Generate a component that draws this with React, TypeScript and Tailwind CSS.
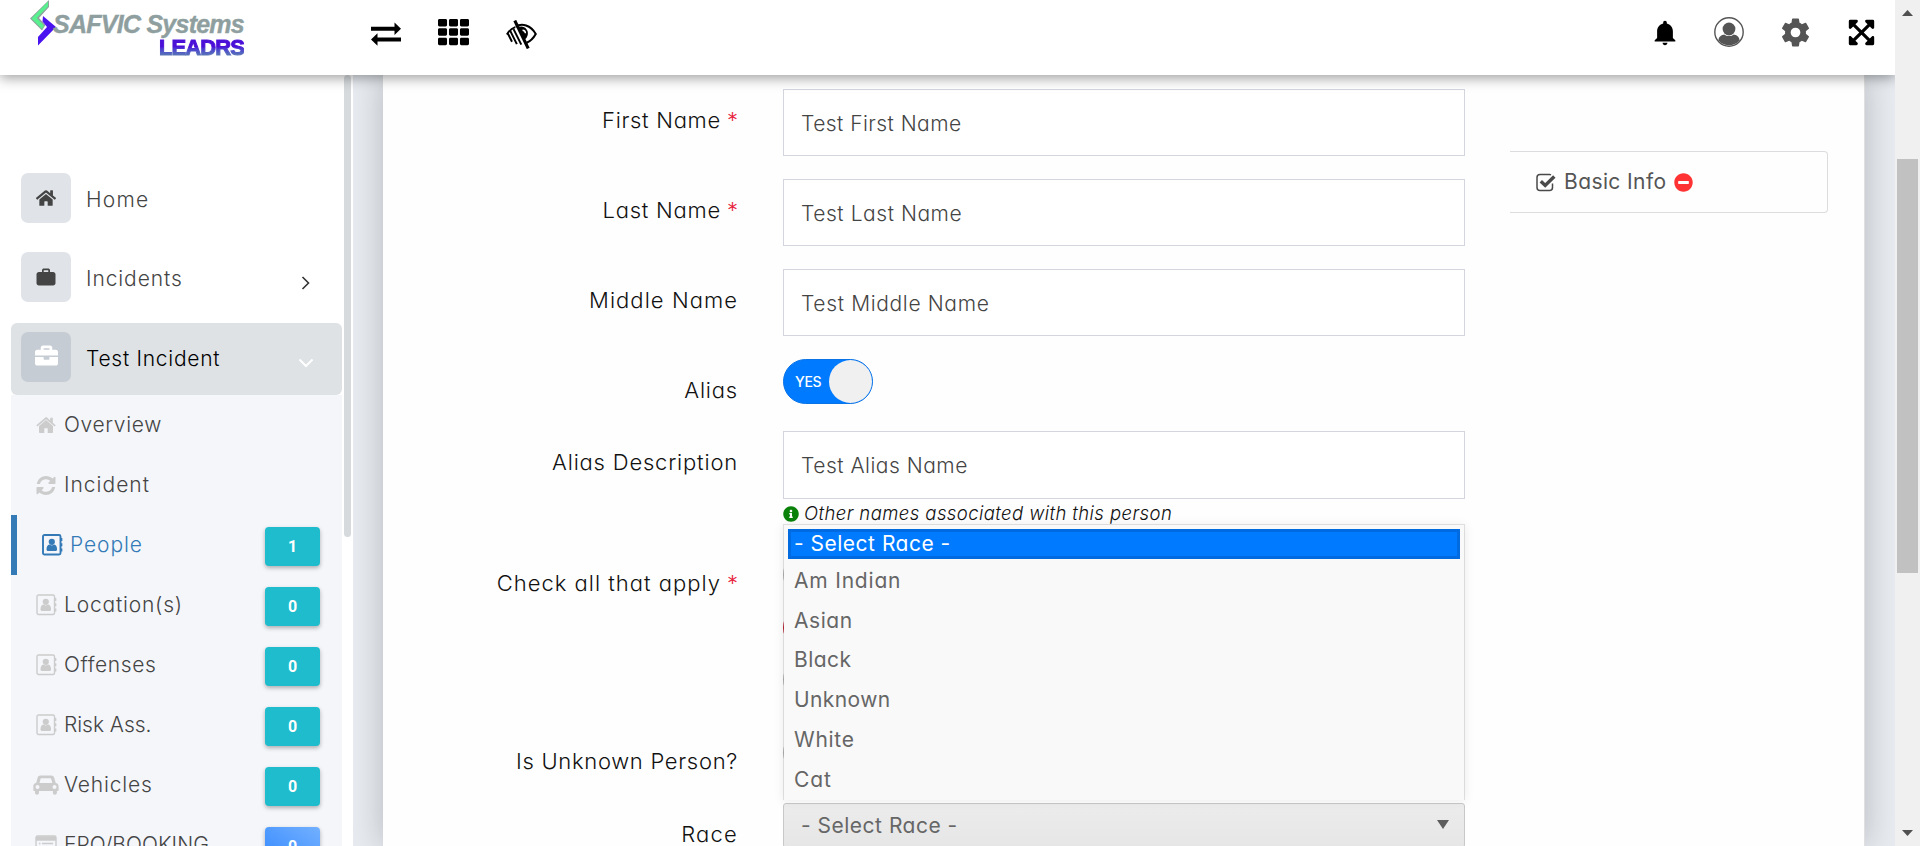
import React from "react";
import {
  FaHome,
  FaBriefcase,
  FaTh,
  FaExpandArrowsAlt,
  FaMinusCircle,
  FaInfoCircle,
} from "react-icons/fa";
import { IoSettingsSharp } from "react-icons/io5";
import { IoMdNotifications } from "react-icons/io";

function SwapIcon() {
  return (
    <svg className="h-[24px] w-[30px]" viewBox="0 0 30 24" fill="currentColor">
      <path d="M0 4.800h23.500V.500L30 6.800 23.500 13V8.800H0z" />
      <path d="M30 15.500H6.500v-4.300L0 17.500l6.500 6.200v-4.200H30z" />
    </svg>
  );
}

function LowVisionIcon() {
  return (
    <svg className="h-[29px] w-[31px]" viewBox="0 0 30 28" fill="none" stroke="currentColor">
      <path d="M9.500 6.500C15 2.500 24 5 28.800 13.500C26 18.500 23.500 20.500 20 22" strokeWidth="2" />
      <path d="M9 6.800C5.500 8 2.500 11 .800 14" strokeWidth="1.800" />
      <path d="M12 7C17 4.500 22.500 9.500 21 14.500C20 18 18.500 19 17.500 18.500Z" fill="currentColor" stroke="none" />
      <path d="M16 9.800a3 3 0 0 1 2.800 3" stroke="#fff" strokeWidth="1.400" />
      <path d="M8.500 .500L21.500 27.500" strokeWidth="3" />
      <path d="M1.800 13l4 8M4 10.300l6.500 13M7.300 8.800l7.500 15" strokeWidth="1.900" />
    </svg>
  );
}

function UserIcon() {
  return (
    <svg className="h-[30px] w-[30px]" viewBox="0 0 30 30">
      <circle cx="15" cy="15" r="14.200" fill="none" stroke="#555" strokeWidth="1.400" />
      <path d="M4.500 23.500C4.500 19.500 7.500 18 10.500 17.500C13 19.500 17 19.500 19.500 17.500C22.500 18 25.500 19.500 25.500 23.500A14 14 0 0 1 4.500 23.500Z" fill="#555" />
      <circle cx="15" cy="12" r="7" fill="#fff" />
      <circle cx="15" cy="12" r="6.400" fill="#555" />
    </svg>
  );
}

function SuitcaseIcon() {
  return (
    <svg className="h-[18px] w-[20px]" viewBox="0 0 20 18" fill="currentColor">
      <path d="M3 4h3V2.300C6 1 7 .500 8 .500h4c1 0 2 .500 2 1.800V4h3c1.500 0 2.500 1 2.500 2.300v9c0 1.200-1 2.200-2.500 2.200H3C1.500 17.500.500 16.500.500 15.300v-9C.500 5 1.500 4 3 4zm4.700 0h4.600V2.300H7.700z" />
    </svg>
  );
}

function SolidHouseIcon() {
  return (
    <svg className="h-[17px] w-[20px]" viewBox="0 0 20 17" fill="currentColor">
      <path d="M10 3L3 9v6.200c0 .500.300.800.800.800H8.300v-4.800h3.400V16h4.500c.500 0 .800-.300.800-.800V9z" />
      <path d="M10 0L.300 8.200l1 1.200L10 2.200l8.700 7.200 1-1.200L16.800 5.700V.800h-2.600v2.700L11 .500C10.500.100 9.500.100 10 0z" />
    </svg>
  );
}

function RefreshIcon() {
  return (
    <svg className="h-[19px] w-[20px]" viewBox="0 0 1536 1536" fill="currentColor">
      <path d="M1511 928q0 5-1 7-64 268-268 434.500T764 1536q-146 0-282.500-55T238 1324l-129 129q-19 19-45 19t-45-19-19-45V960q0-26 19-45t45-19h448q26 0 45 19t19 45-19 45l-137 137q71 66 161 102t187 36q134 0 250-65t186-179q11-17 53-117 8-23 30-23h192q13 0 22.500 9.500t9.500 22.500zm25-800v448q0 26-19 45t-45 19h-448q-26 0-45-19t-19-45 19-45l138-138Q969 256 768 256q-134 0-250 65T332 500q-11 17-53 117-8 23-30 23H50q-13 0-22.500-9.500T18 608v-7q65-268 270-434.500T768 0q146 0 284 55.500T1297 212l130-129q19-19 45-19t45 19 19 45z" />
    </svg>
  );
}

function AddressBookIcon({ bold }: { bold?: boolean }) {
  return (
    <svg className="h-[22px] w-[21px]" viewBox="0 0 21 22" fill="none" stroke="currentColor">
      <rect x="1" y="1" width="17.500" height="19.500" rx="1.500" strokeWidth={bold ? 1.900 : 1.400} />
      <path d="M19.500 4v3M19.500 9.300v3M19.500 14.600v3" strokeWidth="1.700" />
      <circle cx="9.800" cy="7.800" r="3.100" fill="currentColor" stroke="none" />
      <path d="M4.500 15.500c0-3 1.200-4.500 2.800-4.900 1.500 1.100 3.500 1.100 5 0 1.600.400 2.800 1.900 2.800 4.900 0 .900-.700 1.500-1.500 1.500H6c-.800 0-1.500-.600-1.500-1.500z" fill="currentColor" stroke="none" />
    </svg>
  );
}

function CarIcon() {
  return (
    <svg className="h-[20px] w-[26px]" viewBox="0 0 26 20" fill="currentColor" fillRule="evenodd">
      <path d="M7.500.500h10.700c1.500 0 2.600.900 3 2.300l1.500 5.300c1.800.200 2.900 1.400 2.900 3.200v4c0 .400-.300.700-.700.700h-1v1.700c0 1.200-.900 2-2 2s-2-.800-2-2V16H6v1.700c0 1.200-.900 2-2 2s-2-.800-2-2V16H1c-.400 0-.700-.300-.700-.700v-4c0-1.800 1.100-3 2.900-3.200l1.400-5.300C5 1.400 6 .500 7.500.500zm-1 7.500h12.800l-1.200-4.300c-.100-.300-.300-.400-.600-.400H8.200c-.300 0-.500.100-.600.400zM4.500 10a2 2 0 1 0 0 4 2 2 0 0 0 0-4zm17 0a2 2 0 1 0 0 4 2 2 0 0 0 0-4z" />
    </svg>
  );
}

function ListIcon() {
  return (
    <svg className="h-[20px] w-[22px]" viewBox="0 0 22 20" fill="none" stroke="currentColor">
      <rect x="1" y="1" width="20" height="18" rx="1.500" strokeWidth="1.400" />
      <path d="M1 3.500h20" strokeWidth="4.500" />
      <path d="M4 8.500h1.500M7 8.500h11M4 12h1.500M7 12h11M4 15.500h1.500M7 15.500h11" strokeWidth="1.400" />
    </svg>
  );
}

function CheckSquareIcon() {
  return (
    <svg className="h-[19px] w-[20px]" viewBox="0 0 20 19" fill="none" stroke="#4a4a4a">
      <path d="M16.500 10.500v4c0 1.700-1.300 3-3 3H4c-1.700 0-3-1.300-3-3V4.500c0-1.700 1.300-3 3-3h9.500c.600 0 1 .100 1.500.400" strokeWidth="1.500" />
      <path d="M4.800 8.300l4.400 4.200L18.300 3.500" strokeWidth="3.400" />
    </svg>
  );
}

function LogoMark() {
  return (
    <svg className="h-[46px] w-[26px]" viewBox="0 0 26 46">
      <path d="M19 0V7L9 18L15.500 25L12 30.500L0 18.500Z" fill="#8fa39c" />
      <path d="M18 1.500V6.500L6.800 18L14 25.500L12 29L1.500 18.500Z" fill="#58f08f" />
      <path d="M13 16L26 27L8 45.500V37L17 27L12.500 21.500Z" fill="#4a12ee" />
    </svg>
  );
}

function Header() {
  return (
    <header className="relative z-20 flex h-[75px] shrink-0 items-start bg-white shadow-[0_3px_12px_rgba(0,0,0,0.38)]">
      <div className="flex w-[371px] pl-[30px]">
        <LogoMark />
        <div className="flex w-[188px] flex-col items-end font-['Liberation_Sans',sans-serif] font-bold whitespace-nowrap">
          <span className="mt-[11px] text-[25px] leading-[26px] tracking-[-0.750px] text-[#8f9f9f] italic [-webkit-text-stroke:0.400px_#8f9f9f]">
            SAFVIC Systems
          </span>
          <span className="bg-linear-to-b from-[#4b10d8] from-45% to-[#5f7fae] to-90% bg-clip-text text-[22px] leading-[22px] tracking-[-0.900px] text-transparent [-webkit-text-stroke:1px_transparent]">
            LEADRS
          </span>
        </div>
      </div>
      <div className="flex items-start pt-[19px] text-black">
        <div className="pt-[3px]">
          <SwapIcon />
        </div>
        <FaTh className="-mt-[2px] ml-[37px] h-[30px] w-[31px]" preserveAspectRatio="none" />
        <div className="mt-[1px] ml-[37px]">
          <LowVisionIcon />
        </div>
      </div>
      <div className="ml-auto flex items-start gap-[36px] pt-[17px] pr-[19px]">
        <IoMdNotifications className="mt-[1px] mr-[-2px] size-[30px] text-black" />
        <UserIcon />
        <IoSettingsSharp className="size-[31px] text-[#555]" />
        <FaExpandArrowsAlt className="mt-[1px] size-[29px] text-black" />
      </div>
    </header>
  );
}

interface NavItemProps {
  icon: React.ReactNode;
  label: string;
  tracking: string;
  chevron?: "right" | "down";
  active?: boolean;
}

function NavItem({ icon, label, tracking, chevron, active }: NavItemProps) {
  return (
    <div
      className={`flex h-[72px] shrink-0 items-start rounded-[6px] pt-[9px] pl-[10px] ${
        active ? "bg-[#dee2e5] text-black" : "text-[#444]"
      }`}
    >
      <span
        className={`flex size-[50px] items-center justify-center rounded-[7px] ${
          active ? "bg-[#c5ccd3] pb-[4px] text-white" : "bg-[#e0e4e8]"
        }`}
      >
        {icon}
      </span>
      <span className={`ml-[15px] pt-[11px] text-[21px] leading-[32px] font-light ${tracking}`}>{label}</span>
      {chevron && (
        <svg
          className={`mt-[23px] mr-[28px] ml-auto h-[16px] w-[16px] ${active ? "text-white" : "text-[#333]"}`}
          viewBox="0 0 16 16"
          fill="none"
          stroke="currentColor"
        >
          {chevron === "right" ? (
            <path d="M4.500 2l6 6-6 6" strokeWidth="1.600" />
          ) : (
            <path d="M1.500 4.500l6.500 6.500 6.500-6.500" strokeWidth="2" />
          )}
        </svg>
      )}
    </div>
  );
}

interface SubItemProps {
  icon: React.ReactNode;
  label: string;
  tracking: string;
  count?: number;
  selected?: boolean;
  blue?: boolean;
}

function SubItem({ icon, label, tracking, count, selected, blue }: SubItemProps) {
  return (
    <div
      className={`flex h-[60px] shrink-0 items-center pr-[22px] ${
        selected ? "border-l-[6px] border-[#337ab7] pl-[24px] text-[#337ab7]" : "pl-[22px] text-[#444]"
      }`}
    >
      <span
        className={`flex shrink-0 items-center justify-center ${
          selected ? "w-[22px] text-[#337ab7]" : "w-[26px] text-[#ccc]"
        }`}
      >
        {icon}
      </span>
      <span
        className={`text-[21px] leading-[32px] font-light whitespace-nowrap ${
          selected ? "ml-[7px]" : "ml-[5px]"
        } ${tracking}`}
      >
        {label}
      </span>
      {count !== undefined && (
        <span
          className={`mt-[3px] ml-auto flex h-[39px] w-[55px] items-center justify-center rounded-[4px] font-['Roboto'] text-[16px] font-bold text-white shadow-[0_2px_4px_rgba(0,0,0,0.3)] ${
            blue ? "bg-linear-to-tr from-[#2f87ff] to-[#72b0ff]" : "bg-[#1ebccc]"
          }`}
        >
          {count}
        </span>
      )}
    </div>
  );
}

function Sidebar() {
  return (
    <aside className="flex w-[353px] shrink-0 overflow-hidden bg-white pl-[11px]">
      <nav className="flex w-[331px] flex-col pt-[89px]">
        <NavItem icon={<FaHome className="size-[20px]" />} label="Home" tracking="tracking-[1.200px]" />
        <div className="mt-[7px]">
          <NavItem icon={<SuitcaseIcon />} label="Incidents" tracking="tracking-[0.900px]" chevron="right" />
        </div>
        <div className="mt-[8px]">
          <NavItem
            icon={<FaBriefcase className="size-[23px]" />}
            label="Test Incident"
            tracking="tracking-[0.720px]"
            chevron="down"
            active
          />
        </div>
        <div className="flex shrink-0 flex-col bg-[#f4f6fa]">
          <SubItem icon={<SolidHouseIcon />} label="Overview" tracking="tracking-[0.650px]" />
          <SubItem icon={<RefreshIcon />} label="Incident" tracking="tracking-[1px]" />
          <SubItem icon={<AddressBookIcon bold />} label="People" tracking="tracking-[0.900px]" count={1} selected />
          <SubItem icon={<AddressBookIcon />} label="Location(s)" tracking="tracking-[0.800px]" count={0} />
          <SubItem icon={<AddressBookIcon />} label="Offenses" tracking="tracking-[0.600px]" count={0} />
          <SubItem icon={<AddressBookIcon />} label="Risk Ass." tracking="tracking-[-0.050px]" count={0} />
          <SubItem icon={<CarIcon />} label="Vehicles" tracking="tracking-[0.800px]" count={0} />
          <SubItem icon={<ListIcon />} label="EPO/BOOKING" tracking="tracking-[0.050px]" count={0} blue />
        </div>
      </nav>
      <div className="ml-[2px] h-[462px] w-[7px] rounded-[4px] bg-[#d6dadd]" />
    </aside>
  );
}

interface FieldProps {
  label: string;
  tracking: string;
  required?: boolean;
  height: string;
  children: React.ReactNode;
}

function Field({ label, tracking, required, height, children }: FieldProps) {
  return (
    <div className={`grid shrink-0 grid-cols-[355px_682px] gap-x-[45px] ${height}`}>
      <div className="pt-[15px] text-right text-[22px] leading-[32px] font-light whitespace-nowrap text-[#111]">
        <span className={tracking}>{label}</span>
        {required && <span className="pl-[6px] text-[#e8213b]">*</span>}
      </div>
      <div>{children}</div>
    </div>
  );
}

function TextBox({ value, tracking, height }: { value: string; tracking: string; height: string }) {
  return (
    <div
      className={`flex items-center border border-[#d3d5df] bg-white pt-[2px] pl-[17px] text-[21px] font-light text-[#444] ${height} ${tracking}`}
    >
      {value}
    </div>
  );
}

function Toggle({ color }: { color: string }) {
  return <div className={`h-[45px] w-[90px] rounded-full ${color}`} />;
}

const options = [
  { label: "Am Indian", tracking: "tracking-[0.800px]" },
  { label: "Asian", tracking: "tracking-[0.550px]" },
  { label: "Black", tracking: "tracking-[0.450px]" },
  { label: "Unknown", tracking: "tracking-[0.400px]" },
  { label: "White", tracking: "tracking-[0.700px]" },
  { label: "Cat", tracking: "tracking-[0.900px]" },
];

function RaceSelect() {
  return (
    <div className="relative">
      <div className="absolute bottom-full left-0 mb-[3px] flex h-[276px] w-[682px] flex-col border border-b-0 border-black/10 bg-[#f9f9f9] bg-clip-padding px-[4px] pt-[4px] text-[21px] text-[#666] shadow-[0_1px_10px_rgba(0,0,0,0.08)]">
        <div className="mb-[2px] flex h-[30px] shrink-0 items-center border-[3px] border-[#006be0] bg-[#007bff] pl-[3px] font-normal tracking-[0.500px] text-white">
          <span>- Select Race -</span>
        </div>
        {options.map((o) => (
          <div key={o.label} className={`flex h-[39.700px] shrink-0 items-center pl-[6px] ${o.tracking}`}>
            {o.label}
          </div>
        ))}
      </div>
      <div className="flex h-[45px] items-center justify-between rounded-[3px] border border-[#c8c8c8] bg-linear-to-b from-[#ececec] to-[#e6e6e6] pr-[15px] pl-[17px] text-[21px] tracking-[0.500px] text-[#666]">
        <span>- Select Race -</span>
        <svg className="mb-[3px] h-[9px] w-[12px]" viewBox="0 0 12 9" fill="#5c5c5c">
          <path d="M0 0h12L6 9z" />
        </svg>
      </div>
    </div>
  );
}

function PersonForm() {
  return (
    <div className="flex w-[1082px] shrink-0 flex-col pt-[14px]">
      <Field label="First Name" tracking="tracking-[0.700px]" required height="h-[90px]">
        <TextBox value="Test First Name" tracking="tracking-[0.450px]" height="h-[67px]" />
      </Field>
      <Field label="Last Name" tracking="tracking-[0.750px]" required height="h-[90px]">
        <TextBox value="Test Last Name" tracking="tracking-[0.550px]" height="h-[67px]" />
      </Field>
      <Field label="Middle Name" tracking="tracking-[1.050px]" height="h-[90px]">
        <TextBox value="Test Middle Name" tracking="tracking-[0.650px]" height="h-[67px]" />
      </Field>
      <Field label="Alias" tracking="tracking-[0.800px]" height="h-[72px]">
        <div className="flex h-[45px] w-[90px] items-center justify-between rounded-full border border-[#0a73e6] bg-[#007bff] pl-[11px]">
          <span className="text-[14px] font-medium tracking-[-0.300px] text-white">YES</span>
          <span className="size-[43px] rounded-full bg-[#f0f0f1]" />
        </div>
      </Field>
      <Field label="Alias Description" tracking="tracking-[0.800px]" height="h-[121px]">
        <TextBox value="Test Alias Name" tracking="tracking-[0.500px]" height="h-[68px]" />
        <div className="flex items-center gap-[5px] pt-[2px]">
          <FaInfoCircle className="size-[16px] text-[#0a820a]" />
          <span className="text-[18.500px] leading-[25px] font-light tracking-[0.420px] whitespace-nowrap text-[#111] italic">
            Other names associated with this person
          </span>
        </div>
      </Field>
      <Field label="Check all that apply" tracking="tracking-[1px]" required height="h-[178px]">
        <div className="flex flex-col gap-[7.500px]">
          <Toggle color="bg-[#bbb]" />
          <Toggle color="bg-[#c52232]" />
          <Toggle color="bg-[#bbb]" />
        </div>
      </Field>
      <Field label="Is Unknown Person?" tracking="tracking-[0.700px]" height="h-[73px]">
        <Toggle color="bg-[#bbb]" />
      </Field>
      <Field label="Race" tracking="tracking-[1.200px]" height="h-[60px]">
        <RaceSelect />
      </Field>
    </div>
  );
}

function PageScrollbar() {
  return (
    <div className="relative z-30 flex w-[25px] shrink-0 flex-col items-center bg-[#f0f0f0]">
      <svg className="mt-[10px] h-[6px] w-[11px]" viewBox="0 0 11 6" fill="#505050">
        <path d="M0 6h11L5.500 0z" />
      </svg>
      <div className="mt-[143px] h-[414px] w-[21px] bg-[#c1c1c1]" />
      <svg className="mt-auto mb-[10px] h-[6px] w-[11px]" viewBox="0 0 11 6" fill="#505050">
        <path d="M0 0h11L5.500 6z" />
      </svg>
    </div>
  );
}

export default function App() {
  return (
    <div className="flex h-[846px] w-[1920px] overflow-hidden bg-white font-['Inter',sans-serif] [font-feature-settings:'cv11']">
      <div className="flex min-w-0 flex-1 flex-col">
        <Header />
        <div className="flex min-h-0 flex-1">
          <Sidebar />
          <main className="flex flex-1 overflow-hidden bg-[#e7ebf0] pr-[30px] pl-[30px]">
            <div className="flex flex-1 items-start self-stretch border-r border-[#e0e0e0] bg-[#fefefe] shadow-[0_0_30px_rgba(0,0,0,0.22)]">
              <PersonForm />
              <div className="mt-[76px] ml-[45px] flex h-[62px] w-[318px] items-center rounded-r-[4px] border border-l-0 border-[#dcdcde] pl-[26px]">
                <CheckSquareIcon />
                <span className="ml-[8px] text-[21px] font-normal tracking-[0.400px] whitespace-nowrap text-[#555]">
                  Basic Info
                </span>
                <FaMinusCircle className="ml-[8px] size-[19px] text-[#ff3333]" />
              </div>
            </div>
          </main>
        </div>
      </div>
      <PageScrollbar />
    </div>
  );
}
